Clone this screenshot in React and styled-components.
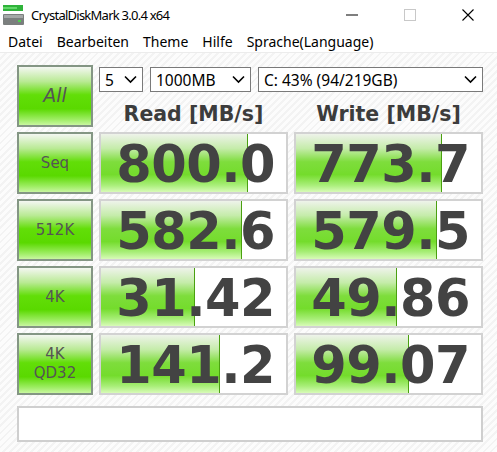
import React from 'react'
import styled, { createGlobalStyle } from 'styled-components'

const GlobalStyle = createGlobalStyle`
  html, body {
    margin: 0;
    padding: 0;
    background: #fff;
  }
  body {
    font-family: "Noto Sans", "DejaVu Sans", sans-serif;
  }
`

const Window = styled.div`
  width: 497px;
  height: 452px;
  display: flex;
  flex-direction: column;
  overflow: hidden;
`

const TitleBar = styled.div`
  height: 30px;
  display: flex;
  align-items: center;
  padding-left: 3px;
  background: #fff;
`

const Title = styled.span`
  margin-left: 7px;
  font-size: 13px;
  letter-spacing: -0.75px;
  color: #000;
  flex: 1;
`

const WinButtons = styled.div`
  display: flex;
  height: 30px;
`

const WinBtn = styled.div`
  width: 58px;
  display: flex;
  align-items: center;
  justify-content: center;
`

const MenuBar = styled.div`
  height: 22px;
  display: flex;
  align-items: center;
  padding-left: 8px;
  background: #fff;
  border-bottom: 1px solid #ececec;
`

const MenuItem = styled.span`
  font-size: 14px;
  color: #000;
  margin-right: ${p => p.$gap}px;
`

const Content = styled.div`
  flex: 1;
  padding: 12px 0 0 17px;
  background: repeating-linear-gradient(
    135deg,
    #fcfcfc 0px,
    #fcfcfc 3px,
    #f3f3f3 3px,
    #f3f3f3 5px
  );
`

const Grid = styled.div`
  display: grid;
  grid-template-columns: 76px 189px 189px;
  grid-template-rows: 62px repeat(4, 62px);
  column-gap: 6px;
  row-gap: 5px;
`

const TopCell = styled.div`
  grid-column: 2 / 4;
  display: flex;
  flex-direction: column;
`

const SelectRow = styled.div`
  display: flex;
  gap: 7px;
  margin-top: 2px;
`

const Select = styled.div`
  width: ${p => p.$w}px;
  height: 25px;
  box-sizing: border-box;
  border: 1px solid #7a7a7a;
  background: #fff;
  display: flex;
  align-items: center;
  justify-content: space-between;
  padding: 0 5px;
  font-size: 15.5px;
  color: #000;
`

const Headers = styled.div`
  display: grid;
  grid-template-columns: 189px 189px;
  column-gap: 6px;
  flex: 1;
  align-items: center;
`

const Header = styled.div`
  text-align: center;
  font-family: "DejaVu Sans", sans-serif;
  font-weight: bold;
  font-size: 20.5px;
  color: #3c3c3c;
  padding-top: 9px;
`

const TestButton = styled.div`
  box-sizing: border-box;
  border: 2px solid #849684;
  background: linear-gradient(
    to bottom,
    #f4f7f2 0%,
    #b9ea94 25%,
    #62de08 48%,
    #5ad900 72%,
    #9ded62 90%,
    #c8f6a0 100%
  );
  display: flex;
  flex-direction: column;
  align-items: center;
  justify-content: center;
  font-family: "DejaVu Sans", sans-serif;
  font-size: ${p => (p.$big ? 19 : 15)}px;
  font-style: ${p => (p.$big ? 'italic' : 'normal')};
  color: #555;
  line-height: 1.25;
`

const ResultCell = styled.div`
  position: relative;
  box-sizing: border-box;
  border: 2px solid #d2d2d2;
  background: #fff;
  display: flex;
  align-items: center;
  justify-content: flex-end;
  padding-right: 11px;
  overflow: hidden;
`

const Fill = styled.div`
  position: absolute;
  left: 0;
  top: 0;
  bottom: 0;
  border-right: 1px solid #4aa010;
  background: linear-gradient(
    to bottom,
    #eef3ea 0%,
    #c5ecaa 25%,
    #7edd3c 48%,
    #74dc2c 70%,
    #a8ee78 88%,
    #d8fbb8 100%
  );
`

const Value = styled.span`
  position: relative;
  font-family: "DejaVu Sans", sans-serif;
  font-weight: bold;
  font-size: 51px;
  letter-spacing: -0.5px;
  color: #434343;
  line-height: 1;
  margin-top: 2px;
`

const Comment = styled.div`
  margin-top: 11px;
  width: 466px;
  height: 36px;
  box-sizing: border-box;
  border: 2px solid #cfcfcf;
  background: #fff;
`

const Chevron = () => (
  <svg width="13" height="9" viewBox="0 0 13 9">
    <path d="M1 1.5 L6.5 7 L12 1.5" fill="none" stroke="#000" strokeWidth="1.6" />
  </svg>
)

const AppIcon = () => (
  <svg width="21" height="20" viewBox="0 0 21 20">
    <rect x="0" y="0" width="20" height="6" fill="#2fb33a" />
    <rect x="0" y="2" width="14" height="2" fill="#63d86a" />
    <rect x="0" y="9" width="21" height="11" rx="1" fill="#7b7f7e" />
    <rect x="1" y="10" width="19" height="3" fill="#a4a8a7" />
    <rect x="15" y="15" width="3" height="2" fill="#4fd14f" />
  </svg>
)

const rows = [
  { label: ['Seq'], read: '800.0', rf: 146, write: '773.7', wf: 145 },
  { label: ['512K'], read: '582.6', rf: 140, write: '579.5', wf: 140 },
  { label: ['4K'], read: '31.42', rf: 93, write: '49.86', wf: 100 },
  { label: ['4K', 'QD32'], read: '141.2', rf: 118, write: '99.07', wf: 112 },
]

function App() {
  return (
    <Window>
      <GlobalStyle />
      <TitleBar>
        <AppIcon />
        <Title>CrystalDiskMark 3.0.4 x64</Title>
        <WinButtons>
          <WinBtn>
            <svg width="12" height="2"><rect width="12" height="1" y="0.5" fill="#000" /></svg>
          </WinBtn>
          <WinBtn>
            <svg width="12" height="12"><rect x="0.5" y="0.5" width="11" height="11" fill="none" stroke="#c8c8c8" /></svg>
          </WinBtn>
          <WinBtn>
            <svg width="12" height="12"><path d="M0.5 0.5 L11.5 11.5 M11.5 0.5 L0.5 11.5" stroke="#000" strokeWidth="1.1" /></svg>
          </WinBtn>
        </WinButtons>
      </TitleBar>
      <MenuBar>
        <MenuItem $gap={14}>Datei</MenuItem>
        <MenuItem $gap={14}>Bearbeiten</MenuItem>
        <MenuItem $gap={14}>Theme</MenuItem>
        <MenuItem $gap={14}>Hilfe</MenuItem>
        <MenuItem $gap={0}>Sprache(Language)</MenuItem>
      </MenuBar>
      <Content>
        <Grid>
          <TestButton $big>All</TestButton>
          <TopCell>
            <SelectRow>
              <Select $w={44}>5<Chevron /></Select>
              <Select $w={101}>1000MB<Chevron /></Select>
              <Select $w={225}>C: 43% (94/219GB)<Chevron /></Select>
            </SelectRow>
            <Headers>
              <Header>Read [MB/s]</Header>
              <Header>Write [MB/s]</Header>
            </Headers>
          </TopCell>
          {rows.map(r => (
            <React.Fragment key={r.read}>
              <TestButton>
                {r.label.map(l => <span key={l}>{l}</span>)}
              </TestButton>
              <ResultCell>
                <Fill style={{ width: r.rf }} />
                <Value>{r.read}</Value>
              </ResultCell>
              <ResultCell>
                <Fill style={{ width: r.wf }} />
                <Value>{r.write}</Value>
              </ResultCell>
            </React.Fragment>
          ))}
        </Grid>
        <Comment />
      </Content>
    </Window>
  )
}

export default App
